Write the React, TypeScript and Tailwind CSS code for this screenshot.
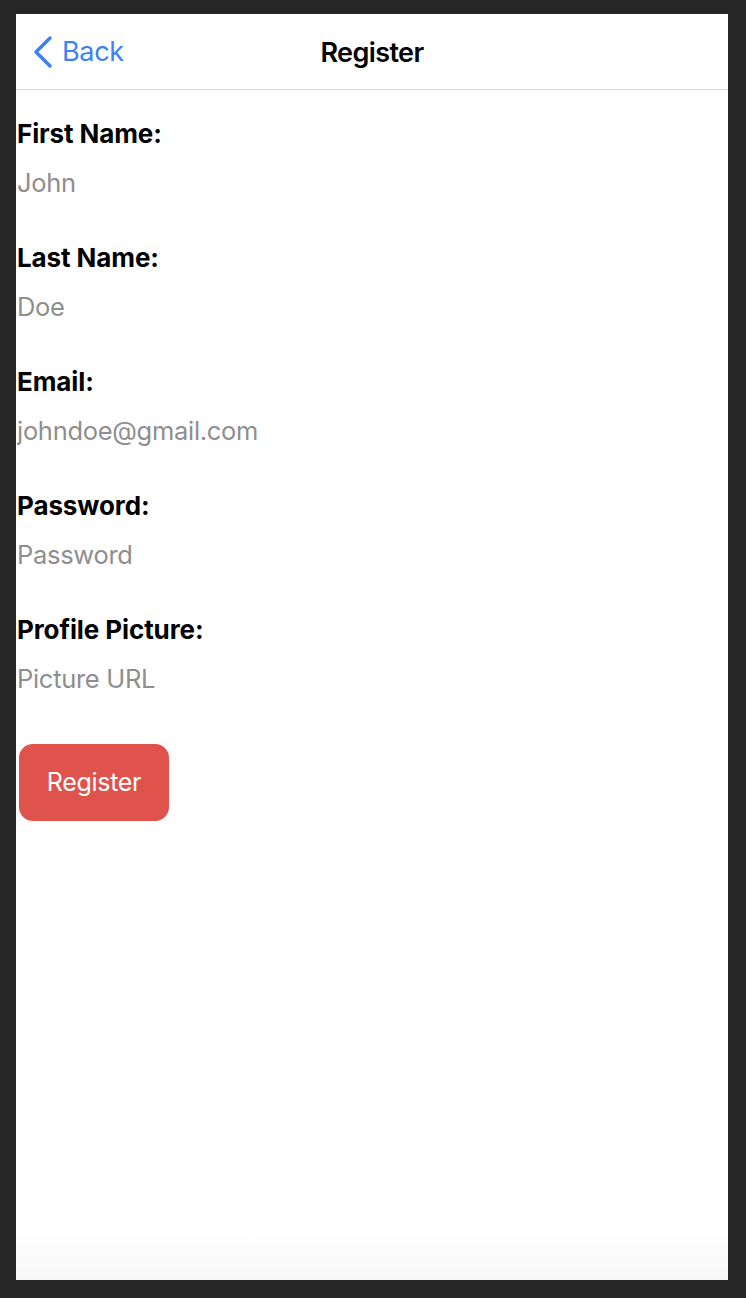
export default function App() {
    const fields = [
        { label: "First Name:", placeholder: "John" },
        { label: "Last Name:", placeholder: "Doe" },
        { label: "Email:", placeholder: "johndoe@gmail.com" },
        { label: "Password:", placeholder: "Password" },
        { label: "Profile Picture:", placeholder: "Picture URL" },
    ];

    return (
        <div className="w-[746px] h-[1298px] bg-[#262626] pt-[14px] pb-[18px] pl-4 pr-[18px] font-['Inter',sans-serif]">
            <div className="h-full bg-gradient-to-b from-white from-[96%] to-[#f8f8f8] flex flex-col">
                {/* Nav bar */}
                <header className="relative h-[76px] border-b border-[#d8d8d8] flex items-center justify-center shrink-0">
                    <button className="absolute left-[16px] top-1/2 -translate-y-1/2 flex items-center gap-[8px] text-[#3b82f6]">
                        <svg className="w-[22px] h-[34px]" viewBox="0 0 22 34" fill="none" stroke="currentColor">
                            <path strokeLinecap="round" strokeLinejoin="round" strokeWidth="3.5" d="M18 3L4 17l14 14" />
                        </svg>
                        <span className="text-[27px] tracking-[-0.3px] leading-none">Back</span>
                    </button>
                    <h1 className="text-[27px] font-semibold text-black tracking-[-0.6px] pt-[3px]">Register</h1>
                </header>

                {/* Form */}
                <form className="flex flex-col pt-[26px]">
                    {fields.map((f) => (
                        <div key={f.label} className="h-[124px] flex flex-col pl-px">
                            <label className="text-[26px] font-bold text-black leading-[36px] tracking-[-0.1px]">{f.label}</label>
                            <input
                                type={f.label === "Password:" ? "password" : "text"}
                                placeholder={f.placeholder}
                                className="mt-[13px] text-[25.5px] leading-[36px] outline-none placeholder:text-[#8e8e8e] tracking-[-0.3px]"
                            />
                        </div>
                    ))}
                    <div className="pl-[3px] pt-[8px]">
                        <button
                            type="button"
                            className="w-[150px] h-[77px] rounded-[14px] bg-[#e0524c] text-white text-[25px] tracking-[-0.3px]"
                        >
                            Register
                        </button>
                    </div>
                </form>
            </div>
        </div>
    );
}
